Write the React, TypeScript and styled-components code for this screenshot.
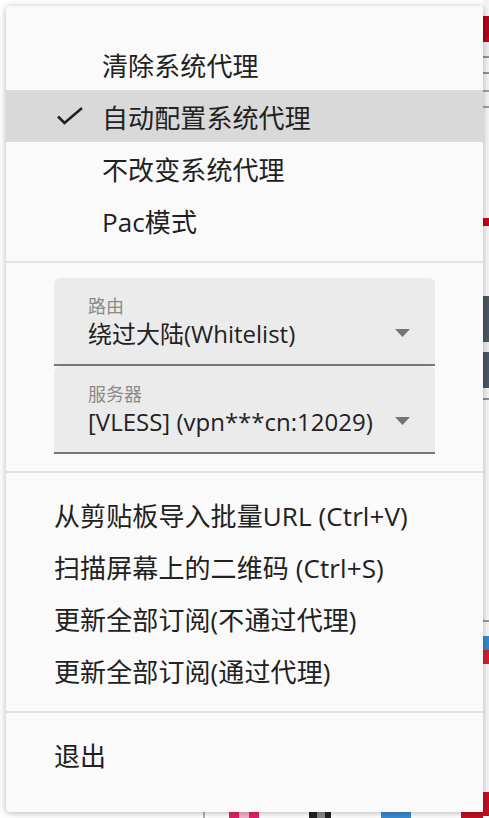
import React from 'react';
import styled, { createGlobalStyle } from 'styled-components';

const Global = createGlobalStyle`
  html, body { margin: 0; padding: 0; background: #fdfdfd; }
  body { font-family: "Open Sans", "Noto Sans CJK SC", sans-serif; }
  #root { width: 489px; height: 818px; }
`;

const Page = styled.div`
  width: 489px;
  height: 818px;
  display: grid;
  grid-template-columns: 6px 477px 6px;
  grid-template-rows: 6px 806px 6px;
  overflow: hidden;
  background: #fdfdfd;
`;

const Menu = styled.div`
  grid-column: 2;
  grid-row: 2;
  position: relative;
  z-index: 1;
  background: #fafafa;
  border-radius: 4px;
  box-shadow: 0 1px 6px rgba(0, 0, 0, 0.28);
  padding: 32px 0;
  display: flex;
  flex-direction: column;
  box-sizing: border-box;
`;

const Item = styled.div<{ $indent: number; $selected?: boolean }>`
  height: 52px;
  flex-shrink: 0;
  display: flex;
  align-items: center;
  padding-left: ${(p) => p.$indent}px;
  background: ${(p) => (p.$selected ? '#d9d9d9' : 'transparent')};
  color: #212121;
  font-size: 26px;
  white-space: nowrap;
`;

const ItemText = styled.span`
  display: block;
  line-height: 34px;
  padding-top: 4px;
  letter-spacing: 0.1px;
`;

const CheckSlot = styled.span`
  width: 49px;
  height: 32px;
  display: flex;
  align-items: center;
  flex-shrink: 0;
`;

const Separator = styled.div`
  height: 2px;
  flex-shrink: 0;
  background: #e2e2e2;
  margin: 15px 0;
`;

const ComboGroup = styled.div`
  display: flex;
  flex-direction: column;
  padding: 0 48px;
  margin-bottom: 2px;
`;

const Combo = styled.div`
  height: 88px;
  box-sizing: border-box;
  background: #ebebeb;
  border-radius: 6px 6px 0 0;
  border-bottom: 2px solid #767676;
  padding: 16px 25px 0 34px;
  display: grid;
  grid-template-columns: 1fr auto;
  grid-template-rows: 24px 32px;
`;

const ComboLabel = styled.div`
  grid-column: 1 / 3;
  font-size: 18px;
  line-height: 24px;
  color: #8a8a8a;
`;

const ComboValue = styled.div`
  font-size: 24px;
  line-height: 32px;
  color: #222;
  white-space: nowrap;
`;

const Arrow = styled.svg`
  align-self: center;
  margin-top: -3px;
`;

const RightStrip = styled.div`
  grid-column: 3;
  grid-row: 1 / 4;
  display: flex;
  flex-direction: column;
`;

const BottomStrip = styled.div`
  grid-column: 1 / 3;
  grid-row: 3;
  display: flex;
`;

const Seg = styled.div<{ $size: number; $color: string }>`
  flex: 0 0 ${(p) => p.$size}px;
  background: ${(p) => p.$color};
`;

const CheckIcon = () => (
  <svg width="32" height="32" viewBox="0 0 32 32">
    <polyline points="5,16.5 11.5,23 29,8" fill="none" stroke="#212121" strokeWidth="2.6" />
  </svg>
);

const DropArrow = () => (
  <Arrow width="15" height="8" viewBox="0 0 15 8">
    <polygon points="0,0 15,0 7.5,8" fill="#757575" />
  </Arrow>
);

const modes = ['清除系统代理', '自动配置系统代理', '不改变系统代理', 'Pac模式'];
const actions = [
  '从剪贴板导入批量URL (Ctrl+V)',
  '扫描屏幕上的二维码 (Ctrl+S)',
  '更新全部订阅(不通过代理)',
  '更新全部订阅(通过代理)',
];

const rightSegs: [number, string][] = [
  [16, '#f3f3f3'], [26, '#b3001b'], [14, '#ececec'], [2, '#8a8f99'], [14, '#f2f2f2'],
  [2, '#8a8f99'], [16, '#f2f2f2'], [2, '#9aa0a8'], [14, '#f2f2f2'], [2, '#9aa0a8'],
  [110, '#f4f4f4'], [8, '#c0001a'], [70, '#f4f4f4'], [46, '#4b5563'], [10, '#eaeaea'],
  [36, '#4b5563'], [10, '#f0f0f0'], [2, '#8a8f99'], [220, '#f4f4f4'], [2, '#9a9a9a'],
  [14, '#f4f4f4'], [14, '#2a8ad4'], [14, '#d0202a'], [128, '#f4f4f4'], [24, '#c01020'],
];

const bottomSegs: [number, string][] = [
  [203, '#fdfdfd'], [2, '#b0b0b0'], [24, '#fdfdfd'], [10, '#e0206a'], [10, '#f3b0c8'],
  [10, '#e0206a'], [50, '#fdfdfd'], [8, '#222'], [8, '#888'], [6, '#222'], [50, '#fdfdfd'],
  [30, '#3a8ad0'], [50, '#fdfdfd'], [22, '#c01020'],
];

export default function App() {
  return (
    <>
      <Global />
      <Page>
        <Menu>
          {modes.map((m, i) => (
            <Item key={m} $indent={47} $selected={i === 1}>
              <CheckSlot>{i === 1 ? <CheckIcon /> : null}</CheckSlot>
              <ItemText>{m}</ItemText>
            </Item>
          ))}
          <Separator />
          <ComboGroup>
            <Combo>
              <ComboLabel>路由</ComboLabel>
              <ComboValue>绕过大陆(Whitelist)</ComboValue>
              <DropArrow />
            </Combo>
            <Combo>
              <ComboLabel>服务器</ComboLabel>
              <ComboValue>[VLESS] (vpn***cn:12029)</ComboValue>
              <DropArrow />
            </Combo>
          </ComboGroup>
          <Separator />
          {actions.map((a) => (
            <Item key={a} $indent={48}>
              <ItemText>{a}</ItemText>
            </Item>
          ))}
          <Separator />
          <Item $indent={48}>
            <ItemText>退出</ItemText>
          </Item>
        </Menu>
        <RightStrip>
          {rightSegs.map(([s, c], i) => (
            <Seg key={i} $size={s} $color={c} />
          ))}
        </RightStrip>
        <BottomStrip>
          {bottomSegs.map(([s, c], i) => (
            <Seg key={i} $size={s} $color={c} />
          ))}
        </BottomStrip>
      </Page>
    </>
  );
}
